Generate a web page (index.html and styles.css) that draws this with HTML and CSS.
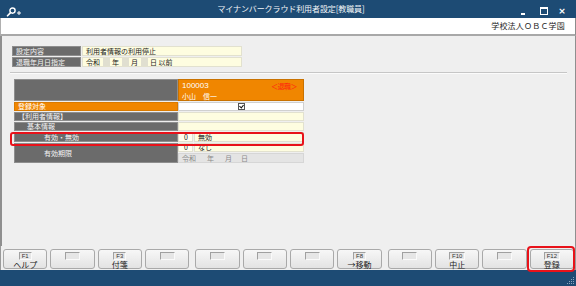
FILE: index.html
```html
<!DOCTYPE html>
<html lang="ja">
<head>
<meta charset="utf-8">
<link rel="stylesheet" href="styles.css">
</head>
<body>
<div class="titlebar">
  <div class="tb-left">
    <svg class="appicon" width="16" height="10" viewBox="0 0 16 10">
      <circle cx="6.5" cy="3.6" r="2.6" fill="none" stroke="#fff" stroke-width="1.4"/>
      <path d="M4.6 5.6 L1.5 8.8" stroke="#fff" stroke-width="1.6" stroke-linecap="round"/>
      <path d="M11 6 H15 M13 4 V8" stroke="#fff" stroke-width="1"/>
    </svg>
  </div>
  <div class="title">マイナンバークラウド利用者設定[教職員]</div>
  <div class="winctl">
    <span class="wc min"></span>
    <span class="wc max"></span>
    <span class="wc close">×</span>
  </div>
</div>
<div class="header"><span class="org">学校法人ＯＢＣ学園</span></div>
<div class="main">
  <div class="cond">
    <div class="lbl">設定内容</div>
    <div class="val">利用者情報の利用停止</div>
    <div class="lbl">退職年月日指定</div>
    <div class="val date">令和<span class="ibox"></span>年<span class="ibox"></span>月<span class="ibox"></span>日 以前</div>
  </div>
  <div class="sep"></div>
  <div class="detail-wrap">
    <div class="detail">
      <div class="lbl head"></div>
      <div class="emp">
        <div class="emp-row"><span class="code">100003</span><span class="retired">＜退職＞</span></div>
        <div class="emp-row">小山　信一</div>
      </div>
      <div class="lbl orange">登録対象</div>
      <div class="val white chk"><span class="checkbox"></span></div>
      <div class="lbl">【利用者情報】</div>
      <div class="val"></div>
      <div class="lbl ind1">基本情報</div>
      <div class="val"></div>
      <div class="lbl ind2">有効・無効</div>
      <div class="split"><span class="num">0</span><span class="txt">無効</span></div>
      <div class="lbl ind2 span2">有効期限</div>
      <div class="split"><span class="num">0</span><span class="txt">なし</span></div>
      <div class="val gray"><span class="d1">令和</span><span class="d2">年</span><span class="d3">月</span><span class="d4">日</span></div>
    </div>
    <div class="hl"></div>
  </div>
</div>
<div class="fkeys">
  <div class="grp">
    <div class="fk"><span class="key">F1</span><span class="cap">ヘルプ</span></div>
    <div class="fk"><span class="key blank"></span></div>
    <div class="fk"><span class="key">F3</span><span class="cap">付箋</span></div>
    <div class="fk"><span class="key blank"></span></div>
  </div>
  <div class="grp">
    <div class="fk"><span class="key blank"></span></div>
    <div class="fk"><span class="key blank"></span></div>
    <div class="fk"><span class="key blank"></span></div>
    <div class="fk"><span class="key">F8</span><span class="cap">→移動</span></div>
  </div>
  <div class="grp">
    <div class="fk"><span class="key blank"></span></div>
    <div class="fk"><span class="key">F10</span><span class="cap">中止</span></div>
    <div class="fk"><span class="key blank"></span></div>
    <div class="fk mark"><span class="key">F12</span><span class="cap">登録</span></div>
  </div>
</div>
<div class="status">
  <svg class="grip" width="8" height="8" viewBox="0 0 8 8">
    <g fill="#8aa4bd">
      <rect x="6" y="0" width="1" height="1"/>
      <rect x="4" y="2" width="1" height="1"/><rect x="6" y="2" width="1" height="1"/>
      <rect x="2" y="4" width="1" height="1"/><rect x="4" y="4" width="1" height="1"/><rect x="6" y="4" width="1" height="1"/>
      <rect x="0" y="6" width="1" height="1"/><rect x="2" y="6" width="1" height="1"/><rect x="4" y="6" width="1" height="1"/><rect x="6" y="6" width="1" height="1"/>
    </g>
  </svg>
</div>
</body>
</html>
```

FILE: styles.css
```css
* { box-sizing: border-box; }
html, body { margin: 0; padding: 0; }
body {
  width: 576px;
  height: 286px;
  overflow: hidden;
  background: #f0f0f0;
  font-family: "Noto Sans CJK JP", "Liberation Sans", sans-serif;
  font-size: 7px;
  line-height: 1;
  color: #222;
}

/* title bar */
.titlebar {
  height: 18px;
  background: #1d4b74;
  display: grid;
  grid-template-columns: 1fr auto 1fr;
  align-items: center;
  color: #fff;
}
.tb-left { padding-left: 6px; display: flex; align-items: center; padding-top: 6px; }
.title { font-size: 8px; letter-spacing: -0.1px; color: #f2f5f8; padding-left: 6px; }
.winctl { display: flex; justify-content: flex-end; padding-right: 6px; align-items: center; padding-top: 4px; }
.wc { width: 21px; height: 8px; display: flex; align-items: center; justify-content: center; }
.wc.min::before { content: ""; width: 4px; height: 2px; background: #fff; margin-top: 5px; }
.wc.max::before { content: ""; width: 6px; height: 5px; border: 1px solid #fff; border-top-width: 2px; }
.wc.close { font-family: "DejaVu Sans", sans-serif; font-size: 9px; font-weight: bold; width: 16px; }

/* header */
.header {
  height: 18px;
  background: #fff;
  border-left: 1px solid #b0b0b0;
  border-right: 1px solid #8c8c8c;
  border-bottom: 2px solid #a8a8a8;
  display: flex;
  justify-content: flex-end;
  align-items: center;
  padding-right: 10px;
}
.org { font-size: 8px; color: #222; letter-spacing: 0.2px; }

/* main */
.main {
  height: 210px;
  background: #efefef;
  border-left: 2px solid #8f8f8f;
  border-right: 1px solid #8f8f8f;
  padding: 10px 0 0 10px;
}
.cond {
  display: grid;
  grid-template-columns: 69px 160px;
  grid-auto-rows: 10px;
  row-gap: 1px;
  column-gap: 1px;
}
.lbl {
  background: #6b6b6b;
  border: 1px solid #8e8e8e;
  color: #f4f4f4;
  padding-left: 3px;
  display: flex;
  align-items: center;
  white-space: nowrap;
}
.val {
  background: #fefde0;
  border: 1px solid #e2e1cf;
  color: #1a1a1a;
  padding-left: 3px;
  display: flex;
  align-items: center;
  white-space: nowrap;
}
.ibox { width: 7px; height: 8px; background: #e0dfd0; margin: 0 2px 0 3px; }

.sep {
  margin: 5px 8px 5px -2px;
  border-top: 1px solid #c6c6c6;
  border-bottom: 1px solid #fbfbfb;
}

.detail-wrap { position: relative; width: 294px; }
.detail {
  display: grid;
  grid-template-columns: 164px 126px;
  grid-template-rows: 22px 9px 9px 9px 10px 9px 10px;
  row-gap: 1px;
  margin-left: 2px;
}
.lbl.head { background: #6b6b6b; border-color: #8e8e8e; }
.emp {
  background: #f08600;
  border: 1px solid #c97200;
  color: #fff;
  padding: 2px 6px 0 3px;
  display: flex;
  flex-direction: column;
  gap: 3px;
}
.emp-row { display: flex; justify-content: space-between; height: 8px; align-items: center; font-size: 7px; }
.code { font-family: "Liberation Sans", sans-serif; font-size: 8px; }
.retired { color: #ff1e10; letter-spacing: -0.5px; }
.lbl.orange { background: #f08600; border-color: #d97a00; color: #fff; }
.val.white { background: #fff; border-color: #d0d0d0; }
.chk { justify-content: center; padding-left: 0; }
.checkbox {
  width: 7px; height: 7px; border: 1px solid #555; background: #fff; position: relative;
}
.checkbox::after {
  content: ""; position: absolute; left: 1px; top: 0px; width: 2px; height: 3px;
  border-right: 1px solid #111; border-bottom: 1px solid #111; transform: rotate(40deg);
}
.ind1 { padding-left: 12px; }
.ind2 { padding-left: 29px; }
.span2 { grid-row: span 2; }
.split { display: flex; gap: 1px; }
.split .num {
  width: 15px; background: #fffef0; border: 1px solid #e2e1cf;
  display: flex; align-items: center; padding-left: 5px;
}
.split .txt {
  flex: 1; background: #fefde0; border: 1px solid #e2e1cf;
  display: flex; align-items: center; padding-left: 3px;
}
.val.gray { background: #e4e4e4; border-color: #d6d6d6; color: #8a8a8a; }
.d1 { width: 25px; }
.d2 { width: 18px; }
.d3 { width: 16px; }

.hl {
  position: absolute;
  left: -2px; top: 53px;
  width: 294px; height: 14px;
  border: 2px solid #e8121a;
  border-radius: 3px;
}

/* function keys */
.fkeys {
  height: 24px;
  background: #efefef;
  border-left: 1px solid #9a9a9a;
  border-right: 1px solid #9a9a9a;
  display: flex;
  gap: 6px;
  padding: 3px 1px 1px 2px;
}
.grp { flex: 1; display: flex; gap: 3px; }
.fk {
  flex: 1;
  position: relative;
  border: 1px solid #a9a9a9;
  border-radius: 3px;
  background: linear-gradient(#f7f7f7, #e3e3e3);
  display: flex;
  flex-direction: column;
  align-items: center;
  padding-top: 2px;
  gap: 1px;
}
.key {
  min-width: 12px;
  height: 8px;
  padding: 0 2px;
  background: #e6e6e6;
  border-top: 1px solid #a0a0a0;
  border-left: 1px solid #a0a0a0;
  border-right: 1px solid #fafafa;
  border-bottom: 1px solid #fafafa;
  font-family: "Liberation Sans", sans-serif;
  font-size: 6px;
  line-height: 6px;
  color: #333;
  text-align: center;
}
.key.blank { width: 15px; }
.cap { font-size: 8px; line-height: 8px; color: #222; }
.fk.mark::after {
  content: "";
  position: absolute;
  left: -4px; top: -4px; right: -2px; bottom: -4px;
  border: 2px solid #e8121a;
  border-radius: 4px;
}

.status {
  height: 16px;
  background: #1d4b74;
  display: flex;
  justify-content: flex-end;
  align-items: flex-end;
  padding: 0 1px 1px 0;
}
```
